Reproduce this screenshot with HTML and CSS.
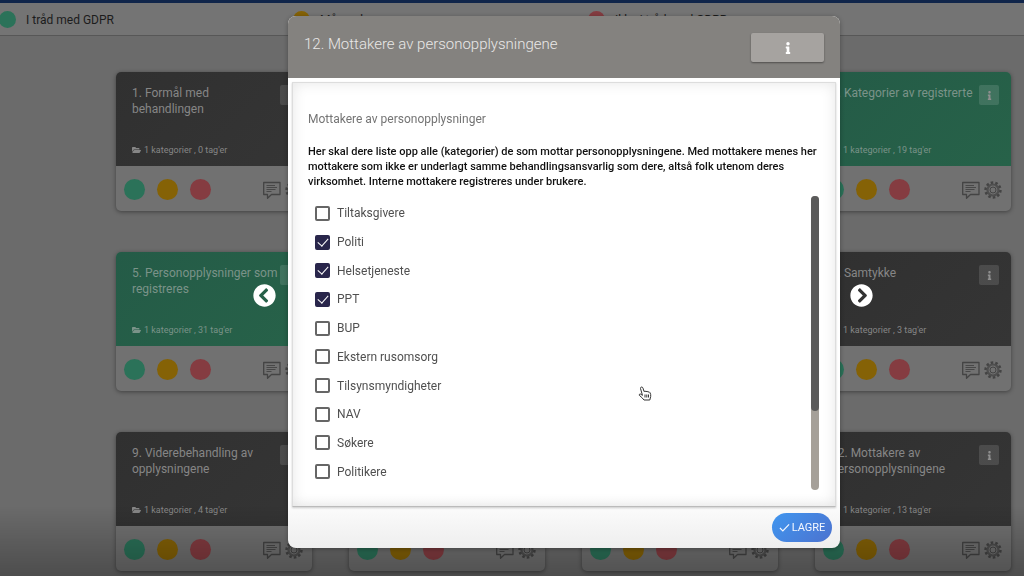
FILE: index.html
```
<!DOCTYPE html>
<html lang="nb">
<head>
<meta charset="utf-8">
<title>Mottakere av personopplysningene</title>
<link rel="stylesheet" href="styles.css">
</head>
<body>
<svg class="sprite" aria-hidden="true">
  <symbol id="info" viewBox="0 0 192 512"><path fill="currentColor" d="M20 424.229h20V279.771H20c-11.046 0-20-8.954-20-20V212c0-11.046 8.954-20 20-20h112c11.046 0 20 8.954 20 20v212.229h20c11.046 0 20 8.954 20 20V492c0 11.046-8.954 20-20 20H20c-11.046 0-20-8.954-20-20v-47.771c0-11.046 8.954-20 20-20zM96 0C56.235 0 24 32.235 24 72s32.235 72 72 72 72-32.235 72-72S135.764 0 96 0z"/></symbol>
  <symbol id="folder" viewBox="0 0 576 512"><path fill="currentColor" d="M572.694 292.093L500.27 416.248A63.997 63.997 0 0 1 444.989 448H45.025c-18.523 0-30.064-20.093-20.731-36.093l72.424-124.155A64 64 0 0 1 152 256h399.964c18.523 0 30.064 20.093 20.73 36.093zM152 224h328v-48c0-26.51-21.49-48-48-48H272l-64-64H48C21.49 64 0 85.49 0 112v278.046l69.077-118.418C86.214 242.25 117.989 224 152 224z"/></symbol>
  <symbol id="chevron" viewBox="0 0 512 512"><path fill="currentColor" d="M256 504C119 504 8 393 8 256S119 8 256 8s248 111 248 248-111 248-248 248zM142.1 273l135.5 135.5c9.4 9.4 24.6 9.4 33.9 0l17-17c9.4-9.4 9.4-24.6 0-33.9L226.9 256l101.6-101.6c9.4-9.4 9.4-24.6 0-33.9l-17-17c-9.4-9.4-24.6-9.4-33.9 0L142.1 239c-9.4 9.4-9.4 24.6 0 34z"/></symbol>
  <symbol id="comment" viewBox="0 0 18 18"><g fill="none" stroke="currentColor"><path stroke-width="1.3" stroke-linejoin="round" d="M.7 1.500h16.300v12H8.500L4.500 17.300V13.500H.7z"/><path stroke-width=".9" d="M3.500 4.500h8.500M3.500 6.500h10.500M3.500 8.500h9M3.500 10.500h5"/></g></symbol>
  <symbol id="gear" viewBox="0 0 18 18"><g fill="none" stroke="currentColor"><circle cx="9" cy="9" r="7.500" stroke-width="2.400" pathLength="40" stroke-dasharray="2.200 1.800"/><circle cx="9" cy="9" r="5.500" stroke-width="2.200" stroke-opacity=".75"/><circle cx="9" cy="9" r="3" stroke-width="1"/></g></symbol>
</svg>

<div class="page">
  <ul class="legend">
    <li><span class="dot green"></span>I tråd med GDPR</li>
    <li><span class="dot yellow"></span>Må vurderes</li>
    <li><span class="dot red"></span>Ikke i tråd med GDPR</li>
  </ul>

  <main class="cards">
    <article class="card first">
      <div class="card-top"><h2>1. Formål med behandlingen</h2><button class="card-info" aria-label="Info"><svg><use href="#info"/></svg></button><p><svg><use href="#folder"/></svg>1 kategorier , 0 tag'er</p></div>
      <div class="card-bottom"><span class="dot green"></span><span class="dot yellow"></span><span class="dot red"></span><svg class="tool push"><use href="#comment"/></svg><svg class="tool"><use href="#gear"/></svg></div>
    </article>
    <article class="card last ok">
      <div class="card-top"><h2>4. Kategorier av registrerte</h2><button class="card-info" aria-label="Info"><svg><use href="#info"/></svg></button><p><svg><use href="#folder"/></svg>1 kategorier , 19 tag'er</p></div>
      <div class="card-bottom"><span class="dot green"></span><span class="dot yellow"></span><span class="dot red"></span><svg class="tool push"><use href="#comment"/></svg><svg class="tool"><use href="#gear"/></svg></div>
    </article>
    <article class="card first ok">
      <div class="card-top"><h2>5. Personopplysninger som registreres</h2><button class="card-info" aria-label="Info"><svg><use href="#info"/></svg></button><p><svg><use href="#folder"/></svg>1 kategorier , 31 tag'er</p></div>
      <div class="card-bottom"><span class="dot green"></span><span class="dot yellow"></span><span class="dot red"></span><svg class="tool push"><use href="#comment"/></svg><svg class="tool"><use href="#gear"/></svg></div>
    </article>
    <article class="card last">
      <div class="card-top"><h2>8. Samtykke</h2><button class="card-info" aria-label="Info"><svg><use href="#info"/></svg></button><p><svg><use href="#folder"/></svg>1 kategorier , 3 tag'er</p></div>
      <div class="card-bottom"><span class="dot green"></span><span class="dot yellow"></span><span class="dot red"></span><svg class="tool push"><use href="#comment"/></svg><svg class="tool"><use href="#gear"/></svg></div>
    </article>
    <article class="card first">
      <div class="card-top"><h2>9. Viderebehandling av opplysningene</h2><button class="card-info" aria-label="Info"><svg><use href="#info"/></svg></button><p><svg><use href="#folder"/></svg>1 kategorier , 4 tag'er</p></div>
      <div class="card-bottom"><span class="dot green"></span><span class="dot yellow"></span><span class="dot red"></span><svg class="tool push"><use href="#comment"/></svg><svg class="tool"><use href="#gear"/></svg></div>
    </article>
    <article class="card">
      <div class="card-top"></div>
      <div class="card-bottom"><span class="dot green"></span><span class="dot yellow"></span><span class="dot red"></span><svg class="tool push"><use href="#comment"/></svg><svg class="tool"><use href="#gear"/></svg></div>
    </article>
    <article class="card">
      <div class="card-top"></div>
      <div class="card-bottom"><span class="dot green"></span><span class="dot yellow"></span><span class="dot red"></span><svg class="tool push"><use href="#comment"/></svg><svg class="tool"><use href="#gear"/></svg></div>
    </article>
    <article class="card">
      <div class="card-top"><h2>12. Mottakere av personopplysningene</h2><button class="card-info" aria-label="Info"><svg><use href="#info"/></svg></button><p><svg><use href="#folder"/></svg>1 kategorier , 13 tag'er</p></div>
      <div class="card-bottom"><span class="dot green"></span><span class="dot yellow"></span><span class="dot red"></span><svg class="tool push"><use href="#comment"/></svg><svg class="tool"><use href="#gear"/></svg></div>
    </article>
  </main>
</div>

<div class="overlay">
  <section class="modal" role="dialog" aria-labelledby="modal-title">
    <header class="modal-head">
      <h1 id="modal-title">12. Mottakere av personopplysningene</h1>
      <button class="head-info" aria-label="Info"><svg><use href="#info"/></svg></button>
    </header>
    <div class="panel">
      <h2>Mottakere av personopplysninger</h2>
      <p class="intro">Her skal dere liste opp alle (kategorier) de som mottar personopplysningene. Med mottakere menes her mottakere som ikke er underlagt samme behandlingsansvarlig som dere, altså folk utenom deres virksomhet. Interne mottakere registreres under brukere.</p>
      <div class="scroller">
        <div class="options">
          <label><input type="checkbox">Tiltaksgivere</label>
          <label><input type="checkbox" checked>Politi</label>
          <label><input type="checkbox" checked>Helsetjeneste</label>
          <label><input type="checkbox" checked>PPT</label>
          <label><input type="checkbox">BUP</label>
          <label><input type="checkbox">Ekstern rusomsorg</label>
          <label><input type="checkbox">Tilsynsmyndigheter</label>
          <label><input type="checkbox">NAV</label>
          <label><input type="checkbox">Søkere</label>
          <label><input type="checkbox">Politikere</label>
        </div>
        <div class="track"><div class="thumb"></div></div>
      </div>
    </div>
    <footer class="modal-foot">
      <button class="save"><svg viewBox="0 0 12 12"><path d="M1 6.500l3.200 3.200L11 2.500" fill="none" stroke="currentColor" stroke-width="1.300"/></svg>LAGRE</button>
    </footer>
    <button class="nav prev" aria-label="Forrige"><svg><use href="#chevron"/></svg></button>
    <button class="nav next" aria-label="Neste"><svg><use href="#chevron"/></svg></button>
    <svg class="pointer" viewBox="0 0 14 16" aria-hidden="true"><path d="M4.500 9.500L2.500 2.500Q2.500 1 3.700 1Q4.600 1 5 2.200L6 5.500Q7 4.500 8 5.600Q9.200 4.800 10 6Q11.400 5.400 12 6.700Q13 8.500 12.700 10.500L11.800 14H6L3.800 11.500L1.300 9.300Q1 8 2.200 7.900L4.300 9.200M7 8.500v3M8.800 8.500v3M10.500 8.500v3" fill="#fff" stroke="#333" stroke-width="1" stroke-linejoin="round"/></svg>
  </section>
</div>
</body>
</html>
```
FILE: styles.css
```
* { box-sizing: border-box; }
body {
  margin: 0;
  height: 100vh;
  overflow: hidden;
  background: #6b6b6b;
  font-family: Roboto, "Liberation Sans", sans-serif;
  font-size: 12px;
  color: #1c1c1c;
}
h1, h2, p, ul { margin: 0; padding: 0; font-weight: 400; }
button { padding: 0; border: 0; font: inherit; }
svg { display: block; }
.sprite { position: absolute; width: 0; height: 0; }
.page {
  height: 100vh;
  overflow: hidden;
  border-top: 3px solid #10254a;
}

.legend {
  display: grid;
  grid-template-columns: 294px 295px 1fr;
  height: 33px;
  padding-top: 1px;
  list-style: none;
  background: #747474;
  border-bottom: 1px solid #575757;
}
.legend li { display: flex; align-items: center; gap: 10px; }
.legend .dot { width: 17px; height: 17px; margin-left: -1px; }
.dot { width: 21px; height: 21px; border-radius: 50%; }
.green { background: #2b7259; }
.yellow { background: #856206; }
.red { background: #853c41; }

.cards {
  display: grid;
  grid-template-columns: repeat(4, 1fr);
  gap: 41px 37px;
  padding: 36px 13px 0 116px;
}
.first { grid-column: 1; }
.last { grid-column: 4; }
.card {
  border-radius: 5px;
  background: #717171;
  box-shadow: 0 1px 4px rgba(0, 0, 0, .4);
  overflow: hidden;
}
.card-top {
  display: grid;
  grid-template-columns: 1fr 20px;
  grid-template-rows: 1fr auto;
  height: 94px;
  padding: 13px 12px 9px 16px;
  background: linear-gradient(135deg, #303030, #353535);
  color: #868686;
}
.ok .card-top { background: linear-gradient(135deg, #245b47, #276249); color: #7b9389; }
.card h2 { font-size: 12px; line-height: 16px; }
.card p {
  grid-column: 1 / 3;
  display: flex;
  align-items: center;
  gap: 3px;
  font-size: 9px;
  line-height: 14px;
}
.card p svg { width: 9px; height: 8px; }
.card-info {
  width: 20px;
  height: 20px;
  display: grid;
  place-items: center;
  border-radius: 2px;
  background: rgba(255, 255, 255, .12);
  color: #8f8f8f;
}
.card-info svg { width: 5px; height: 9px; }
.card-bottom {
  display: flex;
  align-items: center;
  gap: 12px;
  height: 45px;
  padding: 2px 9px 0 8px;
  color: #444;
}
.tool { width: 18px; height: 18px; }
.push { margin-left: auto; margin-right: -8px; }

.overlay {
  position: fixed;
  inset: 0;
  display: flex;
  justify-content: center;
  align-items: flex-start;
  padding: 16px 0 0 104px;
  background: linear-gradient(transparent 88%, rgba(0, 0, 0, .28));
}
.modal {
  position: relative;
  width: 60%;
  min-width: 552px;
  border-radius: 8px;
  background: linear-gradient(#fff 90%, #eee);
  box-shadow: 0 1px 5px rgba(0, 0, 0, .3);
}
.modal-head {
  display: flex;
  justify-content: space-between;
  align-items: flex-start;
  height: 62px;
  padding: 17px 16px 0;
  border-radius: 8px 8px 0 0;
  background: #84827f;
  color: #e9e8e7;
}
.modal-head h1 { font-size: 15px; font-weight: 300; line-height: 22px; }
.head-info {
  width: 73px;
  height: 29px;
  display: grid;
  place-items: center;
  border-radius: 2px;
  background: #a6a3a0;
  box-shadow: 0 1px 2px rgba(0, 0, 0, .4);
  color: #fff;
}
.head-info svg { width: 6px; height: 12px; }
.panel {
  margin: 4px 4px 0;
  padding: 28px 16px 16px 15px;
  border: 1px solid #ddd;
  border-bottom-color: #bbb;
  box-shadow: inset 0 0 14px rgba(0, 0, 0, .1), 0 1px 2px rgba(0, 0, 0, .2);
}
.panel h2 { font-size: 12px; line-height: 16px; color: #747474; }
.intro {
  margin: 17px 0 7px;
  font-size: 11px;
  font-weight: 500;
  line-height: 15px;
  color: #111;
}
.scroller { display: flex; height: 294px; }
.options {
  flex: 1;
  display: grid;
  grid-auto-rows: 1fr;
  padding: 3px 0 4px 7px;
}
.options label {
  display: flex;
  align-items: center;
  gap: 7px;
  color: #505050;
}
.options input {
  appearance: none;
  width: 15px;
  height: 15px;
  margin: 0;
  border: 2px solid #666;
  border-radius: 2px;
}
.options input:checked {
  display: grid;
  place-items: center;
  border-color: #29264b;
  background: #29264b;
}
.options input:checked::before {
  content: "";
  width: 5px;
  height: 9px;
  margin-top: -3px;
  border: solid #fff;
  border-width: 0 1px 1px 0;
  transform: rotate(42deg);
}
.track { width: 8px; border-radius: 4px; background: #a5a099; }
.thumb { height: 73%; border-radius: 4px; background: #5b5b5b; }
.modal-foot {
  display: flex;
  justify-content: flex-end;
  padding: 6px 8px;
}
.save {
  display: flex;
  align-items: center;
  justify-content: center;
  gap: 2px;
  width: 60px;
  height: 29px;
  border-radius: 15px;
  background: linear-gradient(135deg, #4096ef, #4c72cf);
  color: #f4f8ff;
  font-size: 11px;
}
.save svg { width: 11px; height: 11px; }
.nav {
  position: absolute;
  top: 268px;
  width: 23px;
  height: 23px;
  background: none;
  color: #fff;
}
.nav svg { width: 23px; height: 23px; }
.prev { left: -35px; }
.next { right: -33px; transform: scaleX(-1); }
.pointer { position: absolute; left: 350px; top: 370px; width: 14px; height: 16px; }
```
